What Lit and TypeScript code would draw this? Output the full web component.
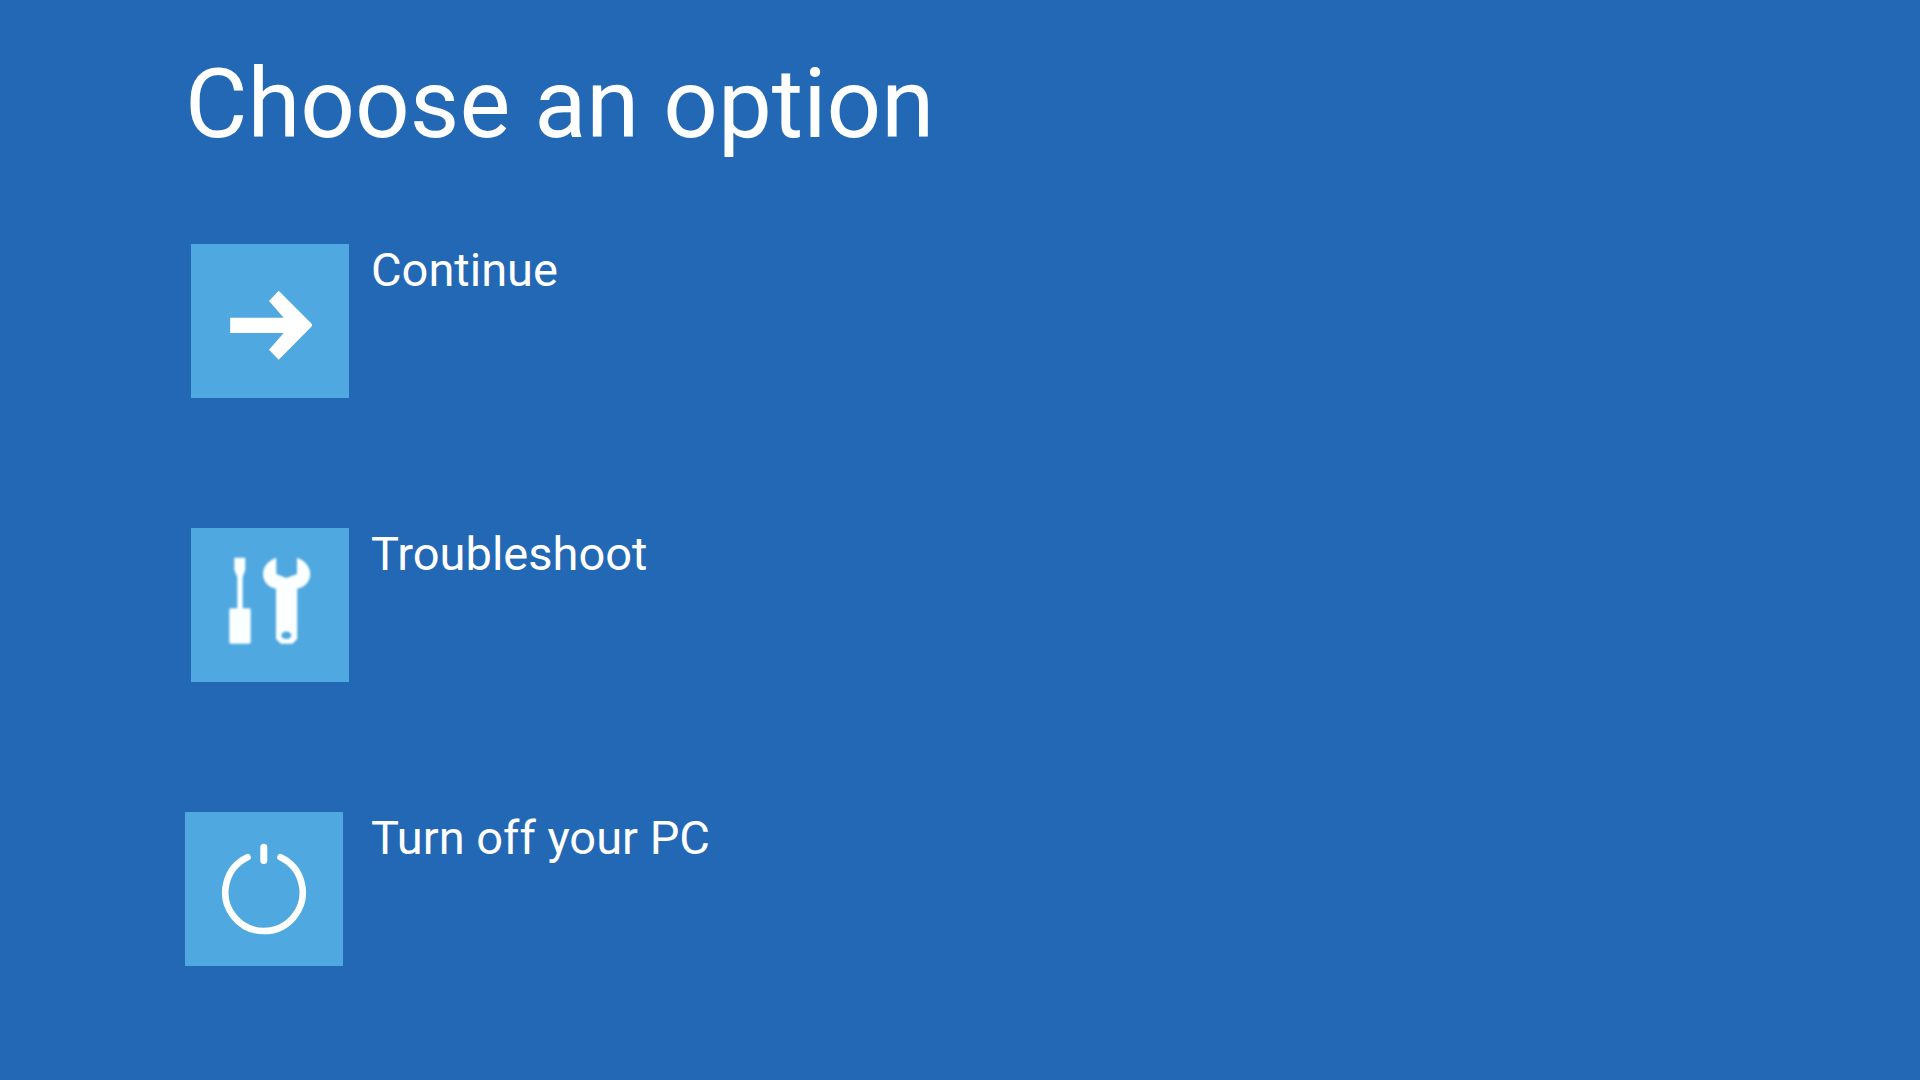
import { LitElement, html, svg, css, type SVGTemplateResult } from "lit";
import { customElement } from "lit/decorators.js";
import { classMap } from "lit/directives/class-map.js";

interface Option {
  label: string;
  icon: SVGTemplateResult;
  outdent?: boolean;
}

const arrowIcon = svg`
  <path fill="#fff" d="M38.2 73.7H91.7L77 57L86.7 46.7L119.4 79.6Q120.8 81.2 119.4 82.8L86.7 115.7L77 105.7L91.7 89H38.2Z"/>
`;

const toolsIcon = svg`
  <g class="soft" fill="#fcffff">
    <path d="M42.3 29.7H53.3V42L50.7 49V80.3H57Q58.7 80.3 58.7 82V114Q58.7 115.7 57 115.7H39Q37.3 115.7 37.3 114V82Q37.3 80.3 39 80.3H45.3V49L42.3 42Z"/>
    <path fill-rule="evenodd" d="M84.3 29.8V46L94.3 50L105 46V29.8C113 32.5 118.2 39 118.2 46.3C118.2 53.5 112.5 59.5 105.2 60.8V111L100.5 115.7H88.8L84 111V60.8C76.5 59.5 71 53.5 71 46.3C71 39 76.3 32.5 84.3 29.8ZM89.3 107.3A5 3.7 0 0 0 99.3 107.3A5 3.7 0 0 0 89.3 107.3Z"/>
  </g>
`;

const powerIcon = svg`
  <g fill="none" stroke="#fff" stroke-linecap="round">
    <path stroke-width="6.6" d="M61.5 45.3A38.7 38.7 0 1 0 94.5 45.3"/>
    <path stroke-width="7" d="M77.8 35.2V48.5"/>
  </g>
`;

const options: Option[] = [
  { label: "Continue", icon: arrowIcon },
  { label: "Troubleshoot", icon: toolsIcon },
  { label: "Turn off your PC", icon: powerIcon, outdent: true },
];

@customElement("app-root")
export class AppRoot extends LitElement {
  static styles = css`
    :host {
      display: block;
      box-sizing: border-box;
      min-height: 100vh;
      padding: 48px 48px 48px 185px;
      background: #2368b5;
      color: #fff;
      font-family: Roboto, "Liberation Sans", sans-serif;
    }

    .title {
      margin: 0 0 84px;
      font-size: 96px;
      font-weight: 400;
      line-height: 112px;
    }

    .options {
      display: flex;
      flex-direction: column;
      align-items: flex-start;
      gap: 130px;
      margin: 0;
      padding: 0;
      list-style: none;
    }

    .option {
      display: grid;
      grid-template-columns: 164px auto;
      column-gap: 22px;
      align-items: start;
      padding: 0;
      border: 0;
      background: none;
      color: inherit;
      font: inherit;
      text-align: left;
      cursor: pointer;
    }

    .tile {
      display: block;
      justify-self: end;
      width: 158px;
      height: 154px;
      background: #4fa8e0;
    }

    .outdent .tile {
      justify-self: start;
    }

    .soft {
      filter: blur(1px);
    }

    .label {
      font-size: 47px;
      line-height: 52px;
    }
  `;

  render() {
    return html`
      <main>
        <h1 class="title">Choose an option</h1>
        <ul class="options">
          ${options.map(
            (option) => html`
              <li>
                <button
                  type="button"
                  class=${classMap({ option: true, outdent: !!option.outdent })}
                >
                  <svg class="tile" viewBox="-1 0 158 154" aria-hidden="true">
                    ${option.icon}
                  </svg>
                  <span class="label">${option.label}</span>
                </button>
              </li>
            `,
          )}
        </ul>
      </main>
    `;
  }
}
